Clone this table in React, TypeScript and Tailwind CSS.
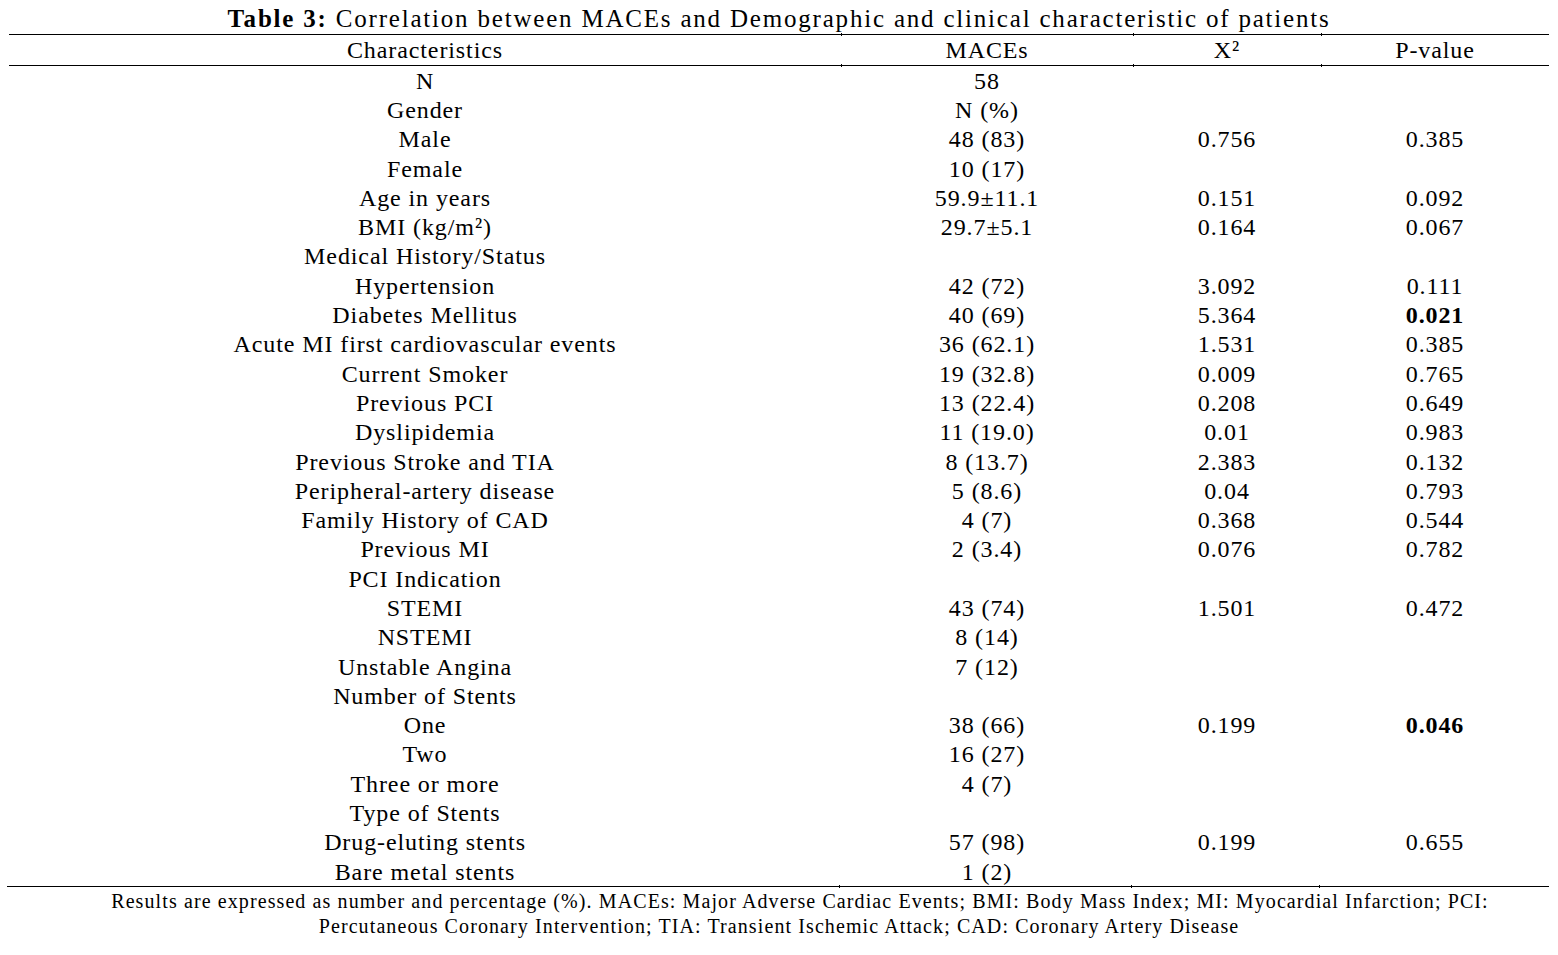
import React from "react";

type Row = { c: string; m?: string; x?: string; p?: string; bold?: boolean };

const rows: Row[] = [
  { c: "N", m: "58" },
  { c: "Gender", m: "N (%)" },
  { c: "Male", m: "48 (83)", x: "0.756", p: "0.385" },
  { c: "Female", m: "10 (17)" },
  { c: "Age in years", m: "59.9±11.1", x: "0.151", p: "0.092" },
  { c: "BMI (kg/m²)", m: "29.7±5.1", x: "0.164", p: "0.067" },
  { c: "Medical History/Status" },
  { c: "Hypertension", m: "42 (72)", x: "3.092", p: "0.111" },
  { c: "Diabetes Mellitus", m: "40 (69)", x: "5.364", p: "0.021", bold: true },
  { c: "Acute MI first cardiovascular events", m: "36 (62.1)", x: "1.531", p: "0.385" },
  { c: "Current Smoker", m: "19 (32.8)", x: "0.009", p: "0.765" },
  { c: "Previous PCI", m: "13 (22.4)", x: "0.208", p: "0.649" },
  { c: "Dyslipidemia", m: "11 (19.0)", x: "0.01", p: "0.983" },
  { c: "Previous Stroke and TIA", m: "8 (13.7)", x: "2.383", p: "0.132" },
  { c: "Peripheral-artery disease", m: "5 (8.6)", x: "0.04", p: "0.793" },
  { c: "Family History of CAD", m: "4 (7)", x: "0.368", p: "0.544" },
  { c: "Previous MI", m: "2 (3.4)", x: "0.076", p: "0.782" },
  { c: "PCI Indication" },
  { c: "STEMI", m: "43 (74)", x: "1.501", p: "0.472" },
  { c: "NSTEMI", m: "8 (14)" },
  { c: "Unstable Angina", m: "7 (12)" },
  { c: "Number of Stents" },
  { c: "One", m: "38 (66)", x: "0.199", p: "0.046", bold: true },
  { c: "Two", m: "16 (27)" },
  { c: "Three or more", m: "4 (7)" },
  { c: "Type of Stents" },
  { c: "Drug-eluting stents", m: "57 (98)", x: "0.199", p: "0.655" },
  { c: "Bare metal stents", m: "1 (2)" },
];

function Rule({ left, right }: { left: string; right: string }) {
  return (
    <div className={`relative h-px bg-black ${left} ${right}`}>
      <div className="absolute left-[832px] top-[-1px] h-[3px] w-px bg-black" />
      <div className="absolute left-[1124px] top-[-1px] h-[3px] w-px bg-black" />
      <div className="absolute left-[1312px] top-[-1px] h-[3px] w-px bg-black" />
    </div>
  );
}

export default function App() {
  return (
    <div className="w-[1558px] h-[955px] bg-white text-black font-['Liberation_Serif',serif]">
      <div className="h-[34px] flex items-center justify-center text-[25px] tracking-[1.8px] leading-none pt-[2px]">
        <span className="font-bold">Table 3:</span>
        <span>&nbsp;Correlation between MACEs and Demographic and clinical characteristic of patients</span>
      </div>
      <Rule left="ml-[9px]" right="w-[1540px]" />
      <div className="flex ml-[9px] h-[30px] items-center text-[24px] tracking-[0.9px] leading-none">
        <div className="w-[832px] text-center">Characteristics</div>
        <div className="w-[292px] text-center">MACEs</div>
        <div className="w-[188px] text-center">X²</div>
        <div className="w-[228px] text-center">P-value</div>
      </div>
      <Rule left="ml-[9px]" right="w-[1540px]" />
      <div className="ml-[9px]">
        {rows.map((r, i) => (
          <div key={i} className="flex h-[29.3px] items-center text-[24px] tracking-[0.9px] leading-none">
            <div className="w-[832px] text-center">{r.c}</div>
            <div className="w-[292px] text-center">{r.m ?? ""}</div>
            <div className="w-[188px] text-center">{r.x ?? ""}</div>
            <div className={`w-[228px] text-center ${r.bold ? "font-bold" : ""}`}>{r.p ?? ""}</div>
          </div>
        ))}
      </div>
      <Rule left="ml-[7px]" right="w-[1542px]" />
      <div className="text-[20px] tracking-[1.1px] leading-[25px] pt-[2px]">
        <div className="text-center pl-[42px]">
          Results are expressed as number and percentage (%). MACEs: Major Adverse Cardiac Events; BMI: Body Mass Index; MI: Myocardial Infarction; PCI:
        </div>
        <div className="text-center">
          Percutaneous Coronary Intervention; TIA: Transient Ischemic Attack; CAD: Coronary Artery Disease
        </div>
      </div>
    </div>
  );
}
